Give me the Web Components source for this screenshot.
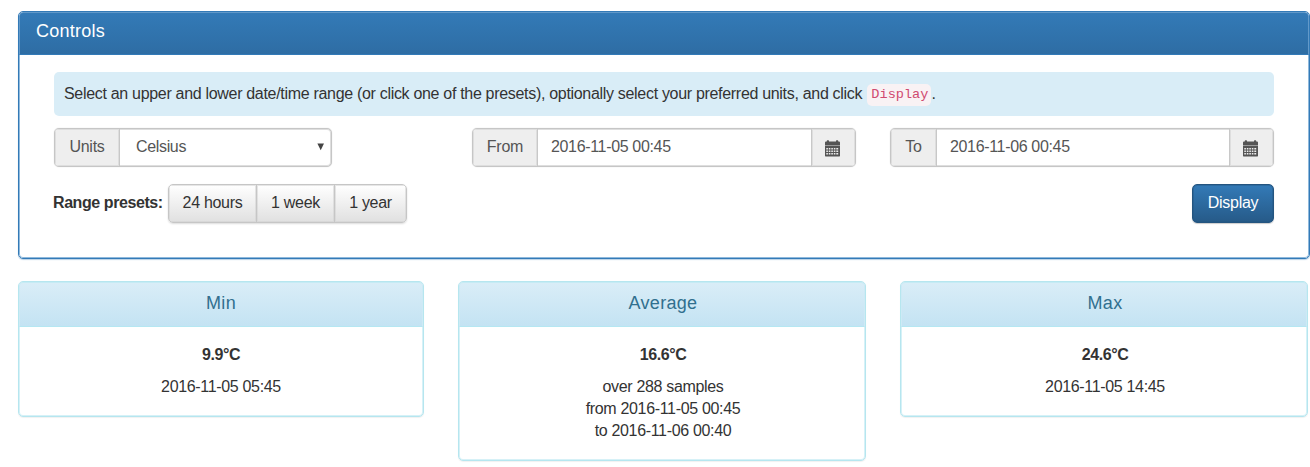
<!DOCTYPE html>
<html lang="en">
<head>
<meta charset="utf-8">
<title>Temperature</title>
<style>
html,body{margin:0;background:#fff}
body{font:16px/22px "Liberation Sans",Arial,sans-serif;color:#333;height:467px;overflow:hidden;letter-spacing:-.34px}
</style>
</head>
<body>
<temp-dashboard></temp-dashboard>
<script>
const define=(name,html)=>customElements.define(name,class extends HTMLElement{
  constructor(){
    super();
    const t=document.createElement('template');
    t.innerHTML='<style>*{box-sizing:border-box}:host{box-sizing:border-box;display:block}</style>'+html;
    this.attachShadow({mode:'open'}).append(t.content.cloneNode(true));
  }
});

define('calendar-icon',`
<style>:host{width:16px;height:17px}svg{display:block}</style>
<svg width="16" height="17" viewBox="0 0 16 17">
  <path fill="#555" d="M0 5V2.6Q0 1.6 1 1.6H1.8V.9Q1.8.3 2.4.3H3.4Q4 .3 4 .9V1.6H11V.9Q11 .3 11.6.3H12.6Q13.2.3 13.2.9V1.6H14Q15 1.6 15 2.6V5ZM0 6H15V15.8Q15 16.4 14.4 16.4H.6Q0 16.4 0 15.8Z"/>
  <path fill="#555" opacity=".55" d="M0 4.8H15V6.1H0Z"/>
  <path fill="#ededed" d="M3.8 8h1.6v1.6H3.8zM6.3 8h1.6v1.6H6.3zM8.8 8h1.6v1.6H8.8zM11.3 8h1.9v1.6h-1.9zM1.3 8h1.6v1.6H1.3zM1.3 10.5h1.6v1.6H1.3zM3.8 10.5h1.6v1.6H3.8zM6.3 10.5h1.6v1.6H6.3zM8.8 10.5h1.6v1.6H8.8zM11.3 10.5h1.9v1.6h-1.9zM1.3 13h1.6v1.6H1.3zM3.8 13h1.6v1.6H3.8zM6.3 13h1.6v1.6H6.3zM8.8 13h1.6v1.6H8.8zM11.3 13h1.9v1.6h-1.9z"/>
</svg>`);

define('input-group',`
<style>
:host{display:flex;height:39px;border:1px solid #c6c6c6;border-radius:5px;background:#fff;color:#555;box-shadow:inset 0 0 0 1px #dedede,0 0 1px #ccc;overflow:hidden}
.addon{flex:none;width:var(--label);background:#eee;border-right:1px solid #c8c8c8;text-align:center;padding-top:7px;box-shadow:inset 0 0 0 1px #dedede;letter-spacing:-.25px}
.value{flex:1;padding:7px 0 0 var(--pad,13px);letter-spacing:var(--ls,-.34px)}
</style>
<div class="addon"><slot name="label"></slot></div><div class="value"><slot></slot></div><slot name="end"></slot>`);

define('group-button',`
<style>
:host{width:44px;background:#eee;border-left:1px solid #c8c8c8;box-shadow:inset 0 0 0 1px #dedede;padding:11px 0 0 12.5px}
</style><calendar-icon></calendar-icon>`);

define('select-arrow',`
<style>:host{width:14px;padding-top:14px}svg{display:block}</style>
<svg width="8" height="8" viewBox="0 0 8 8"><path fill="#444" d="M.4.4H7L3.7 7.2Z"/></svg>`);

define('preset-group',`
<style>
:host{display:flex;height:39px;border:1px solid #c6c6c6;border-radius:5px;overflow:hidden;box-shadow:0 1px 2px rgba(0,0,0,.14);background:linear-gradient(#fff,#e0e0e0)}
::slotted(span){box-sizing:border-box;padding-top:7px;text-align:center;border-left:1px solid #c6c6c6;box-shadow:inset 0 0 0 1px rgba(210,210,210,.55);letter-spacing:-.3px}
::slotted(span:first-child){border-left:0}
</style><slot></slot>`);

define('primary-button',`
<style>
:host{width:82px;height:39px;border:1px solid #245580;border-radius:5px;background:linear-gradient(#337ab7,#265a88);color:#fff;text-align:center;padding-top:7px;letter-spacing:-.25px;box-shadow:inset 0 0 0 1px rgba(36,85,128,.4),0 1px 1px rgba(0,0,0,.2)}
</style><slot></slot>`);

define('info-alert',`
<style>
:host{height:44px;background:#d9edf7;border-radius:5px;padding:11px 0 0 10.5px;margin-left:-.5px;white-space:nowrap;letter-spacing:-.31px}
</style><slot></slot>`);

define('code-chip',`
<style>
:host{display:inline-block;height:22px;line-height:22px;padding:0 3px 0 4px;margin-left:1px;border-radius:5px;background:#f9f2f4;color:#d04a70;font-family:"Liberation Mono",monospace;font-size:13.6px;letter-spacing:0;vertical-align:top;margin-top:1px}
</style><slot></slot>`);

define('control-panel',`
<style>
:host{height:248px;width:1291.5px;border:1px solid #337ab7;border-radius:5px;box-shadow:0 1px 1px rgba(51,122,183,.35);overflow:hidden}
header{height:43px;background:linear-gradient(#337ab7,#2e6da4);color:#fff;border:solid #6299c9;border-width:1px 1px 0;border-radius:4px 4px 0 0;border-bottom:1px solid #337ab7;padding:7px 0 0 16px;font-size:18px;letter-spacing:.25px}
.body{height:203px;border:1px solid #8fb9dc;border-top:0;border-radius:0 0 4px 4px;padding:17px 33.5px 0 34px}
.row{display:flex;justify-content:space-between}
.fields{margin-top:12px}
.units{width:278px;--label:65px;--pad:16px}
.from{width:384px;--label:65px;margin-left:140px}
.to{width:384px;--label:46px;margin-left:auto}
.actions{margin-top:17px}
.presets{display:flex}
b{padding-top:8px;width:115px;letter-spacing:-.42px;margin-left:-1px}
</style>
<header>Controls</header>
<div class="body">
  <info-alert>Select an upper and lower date/time range (or click one of the presets), optionally select your preferred units, and click <code-chip>Display</code-chip>.</info-alert>
  <div class="row fields">
    <input-group class="units"><span slot="label">Units</span>Celsius<select-arrow slot="end"></select-arrow></input-group>
    <input-group class="from"><span slot="label">From</span>2016-11-05 00:45<group-button slot="end"></group-button></input-group>
    <input-group class="to"><span slot="label">To</span>2016-11-06 00:45<group-button slot="end"></group-button></input-group>
  </div>
  <div class="row actions">
    <div class="presets"><b>Range presets:</b>
      <preset-group><span style="width:87px">24 hours</span><span style="width:78px">1 week</span><span style="width:72px">1 year</span></preset-group>
    </div>
    <primary-button>Display</primary-button>
  </div>
</div>`);

define('stat-card',`
<style>
:host{border:1px solid #b6e6ef;border-radius:5px;text-align:center;box-shadow:0 1px 1px rgba(0,0,0,.06),inset 0 0 0 1px #d6f1f7;padding-bottom:18px}
header{height:45px;padding:9px 0 0 var(--shift,0);background:linear-gradient(#d9edf7,#c4e3f3);color:#31708f;border:1px solid #bce8f1;border-color:#c6ebf4 #cdeaf5 #b5e7f2;border-radius:4px 4px 0 0;font-size:18px;letter-spacing:.3px}
.value,.detail{padding-left:var(--shift,0)}
.value{font-weight:bold;margin-top:17px;letter-spacing:-.4px}
.detail{margin-top:10px;letter-spacing:-.33px}
</style>
<header><slot name="title"></slot></header>
<div class="value"><slot name="value"></slot></div>
<div class="detail"><slot></slot></div>`);

define('temp-dashboard',`
<style>
:host{padding:11px 0 0 18px}
.cards{display:grid;grid-template-columns:406px 408px 408px;column-gap:34px;align-items:start;margin-top:22px}
stat-card+stat-card{--shift:2px}
</style>
<control-panel></control-panel>
<div class="cards">
  <stat-card><span slot="title">Min</span><span slot="value">9.9°C</span>2016-11-05 05:45</stat-card>
  <stat-card><span slot="title">Average</span><span slot="value">16.6°C</span>over 288 samples<br>from 2016-11-05 00:45<br>to 2016-11-06 00:40</stat-card>
  <stat-card><span slot="title">Max</span><span slot="value">24.6°C</span>2016-11-05 14:45</stat-card>
</div>`);
</script>
</body>
</html>
